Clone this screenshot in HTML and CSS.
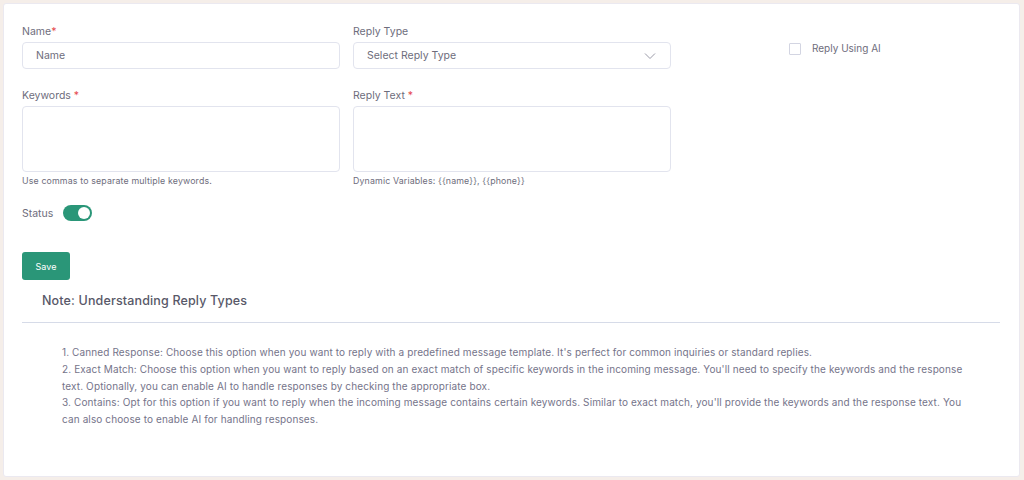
FILE: index.html
```html
<!DOCTYPE html>
<html lang="en">
<head>
  <meta charset="UTF-8">
  <title>Auto Reply</title>
  <link rel="stylesheet" href="styles.css">
</head>
<body>
  <div class="card">
    <form class="reply-form">
      <div class="field">
        <label>Name<span class="req">*</span></label>
        <input type="text" class="input" placeholder="Name">
      </div>
      <div class="field">
        <label>Reply Type</label>
        <div class="select">
          <span>Select Reply Type</span>
          <svg width="12" height="8" viewBox="0 0 12 8"><path d="M1 1.5l5 5 5-5" fill="none" stroke="#9a9aa8" stroke-width="1"/></svg>
        </div>
      </div>
      <div class="ai-check">
        <span class="box"></span>
        <span>Reply Using AI</span>
      </div>

      <div class="field">
        <label>Keywords <span class="req">*</span></label>
        <textarea class="input area"></textarea>
        <small>Use commas to separate multiple keywords.</small>
      </div>
      <div class="field">
        <label>Reply Text <span class="req">*</span></label>
        <textarea class="input area"></textarea>
        <small>Dynamic Variables: {{name}}, {{phone}}</small>
      </div>
    </form>

    <div class="status">
      <span>Status</span>
      <span class="toggle"><span class="knob"></span></span>
    </div>

    <button class="save">Save</button>

    <h4 class="note-title">Note: Understanding Reply Types</h4>
    <hr class="divider">
    <div class="note-text">
      <p>1. Canned Response: Choose this option when you want to reply with a predefined message template. It's perfect for common inquiries or standard replies.</p>
      <p>2. Exact Match: Choose this option when you want to reply based on an exact match of specific keywords in the incoming message. You'll need to specify the keywords and the response text. Optionally, you can enable AI to handle responses by checking the appropriate box.</p>
      <p>3. Contains: Opt for this option if you want to reply when the incoming message contains certain keywords. Similar to exact match, you'll provide the keywords and the response text. You can also choose to enable AI for handling responses.</p>
    </div>
  </div>
</body>
</html>
```

FILE: styles.css
```css
* {
  box-sizing: border-box;
}
body {
  margin: 0;
  padding: 3px 4px 3px 3px;
  background: #f5eee9;
  font-family: Inter, "Noto Sans", sans-serif;
  color: #6e6d7c;
}
.card {
  background: #fff;
  height: 474px;
  border: 1px solid #ebe9f0;
  border-radius: 3px;
  padding: 21px 19px 0 18px;
}
.reply-form {
  display: grid;
  grid-template-columns: 318px 318px 1fr;
  column-gap: 13px;
  row-gap: 20px;
}
.field label {
  display: block;
  font-size: 10.5px;
  line-height: 14px;
  margin-bottom: 3px;
  color: #6e6d7c;
}
.req {
  color: #e5484d;
}
.input {
  display: block;
  width: 100%;
  height: 27px;
  border: 1px solid #e2e4ee;
  border-radius: 4px;
  padding: 0 13px;
  font-family: inherit;
  font-size: 10.5px;
  color: #6e6d7c;
  outline: none;
  resize: none;
}
.input::placeholder {
  color: #6e6d7c;
}
.area {
  height: 66px;
}
.select {
  height: 27px;
  border: 1px solid #e2e4ee;
  border-radius: 4px;
  padding: 0 13px;
  display: flex;
  align-items: center;
  justify-content: space-between;
  font-size: 10.5px;
}
.select svg {
  margin-right: 1px;
}
.field small {
  display: block;
  font-size: 8.8px;
  letter-spacing: 0.15px;
  margin-top: 3px;
  color: #6e6d7c;
}
.ai-check {
  display: flex;
  align-items: center;
  gap: 11px;
  margin: 16px 0 0 105px;
  font-size: 10px;
  align-self: start;
}
.box {
  width: 12px;
  height: 12px;
  border: 1px solid #d3d5e2;
  border-radius: 1px;
  margin-top: 2px;
}
.status {
  display: flex;
  align-items: center;
  gap: 10px;
  margin-top: 19px;
  font-size: 10.5px;
}
.toggle {
  width: 29px;
  height: 16px;
  border-radius: 8px;
  background: #2a9678;
  display: flex;
  align-items: center;
  justify-content: flex-end;
  padding: 2px;
}
.knob {
  width: 12px;
  height: 12px;
  border-radius: 50%;
  background: #fff;
}
.save {
  display: block;
  margin-top: 31px;
  width: 48px;
  height: 28px;
  border: none;
  border-radius: 3px;
  background: #2a9678;
  color: #fff;
  font-family: inherit;
  font-size: 9px;
}
.note-title {
  margin: 13px 0 0 20px;
  font-size: 12.5px;
  font-weight: 500;
  letter-spacing: 0.15px;
  color: #585868;
  line-height: 16px;
}
.divider {
  border: none;
  border-top: 1px solid #d6dbe8;
  margin: 13px 0 0;
}
.note-text {
  margin: 21px 32px 0 40px;
  font-size: 10px;
  letter-spacing: 0.12px;
  line-height: 16.8px;
  color: #75748a;
}
.note-text p {
  margin: 0;
}
```
